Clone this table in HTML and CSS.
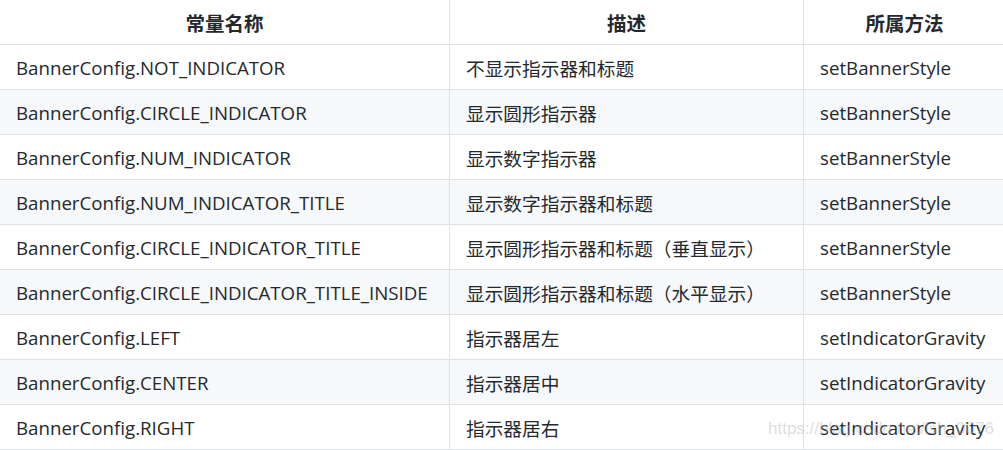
FILE: index.html
```html
<!DOCTYPE html>
<html lang="zh">
<head>
<meta charset="utf-8">
<link rel="stylesheet" href="styles.css">
</head>
<body>
<div class="wrap">
<table class="tbl">
  <colgroup>
    <col class="c1"><col class="c2"><col class="c3">
  </colgroup>
  <thead>
    <tr><th>常量名称</th><th>描述</th><th>所属方法</th></tr>
  </thead>
  <tbody>
    <tr><td>BannerConfig.NOT_INDICATOR</td><td>不显示指示器和标题</td><td>setBannerStyle</td></tr>
    <tr><td>BannerConfig.CIRCLE_INDICATOR</td><td>显示圆形指示器</td><td>setBannerStyle</td></tr>
    <tr><td>BannerConfig.NUM_INDICATOR</td><td>显示数字指示器</td><td>setBannerStyle</td></tr>
    <tr><td>BannerConfig.NUM_INDICATOR_TITLE</td><td>显示数字指示器和标题</td><td>setBannerStyle</td></tr>
    <tr><td>BannerConfig.CIRCLE_INDICATOR_TITLE</td><td>显示圆形指示器和标题（垂直显示）</td><td>setBannerStyle</td></tr>
    <tr><td>BannerConfig.CIRCLE_INDICATOR_TITLE_INSIDE</td><td>显示圆形指示器和标题（水平显示）</td><td>setBannerStyle</td></tr>
    <tr><td>BannerConfig.LEFT</td><td>指示器居左</td><td>setIndicatorGravity</td></tr>
    <tr><td>BannerConfig.CENTER</td><td>指示器居中</td><td>setIndicatorGravity</td></tr>
    <tr><td>BannerConfig.RIGHT</td><td>指示器居右</td><td>setIndicatorGravity</td></tr>
  </tbody>
</table>
<div class="watermark">https://blog.csdn.net/lsh_0076</div>
</div>
</body>
</html>
```

FILE: styles.css
```css
html, body {
  margin: 0;
  padding: 0;
  background: #ffffff;
  overflow: hidden;
}
.wrap {
  position: relative;
  width: 1003px;
  height: 450px;
  overflow: hidden;
}
.tbl {
  border-collapse: collapse;
  table-layout: fixed;
  width: 1006px;
  margin: -1px 0 0 -1px;
  font-family: "Open Sans", "Noto Sans CJK SC", sans-serif;
  font-size: 18.7px;
  color: #24292e;
}
.c1 { width: 450px; }
.c2 { width: 354px; }
.c3 { width: 202px; }
.tbl th, .tbl td {
  border: 1px solid #dfe2e5;
  height: 45px;
  padding: 0 16px;
  box-sizing: border-box;
  white-space: nowrap;
  overflow: hidden;
}
.tbl th {
  font-weight: 700;
  text-align: center;
  font-size: 19.5px;
}
.tbl td { text-align: left; }
.tbl tbody tr:nth-child(odd) { background: #ffffff; }
.tbl tbody tr:nth-child(even) { background: #f6f8fa; }
.watermark {
  position: absolute;
  left: 768px;
  top: 419px;
  font-family: "Liberation Sans", Arial, sans-serif;
  font-size: 17px;
  color: rgba(180, 180, 180, 0.45);
  white-space: nowrap;
}
```
